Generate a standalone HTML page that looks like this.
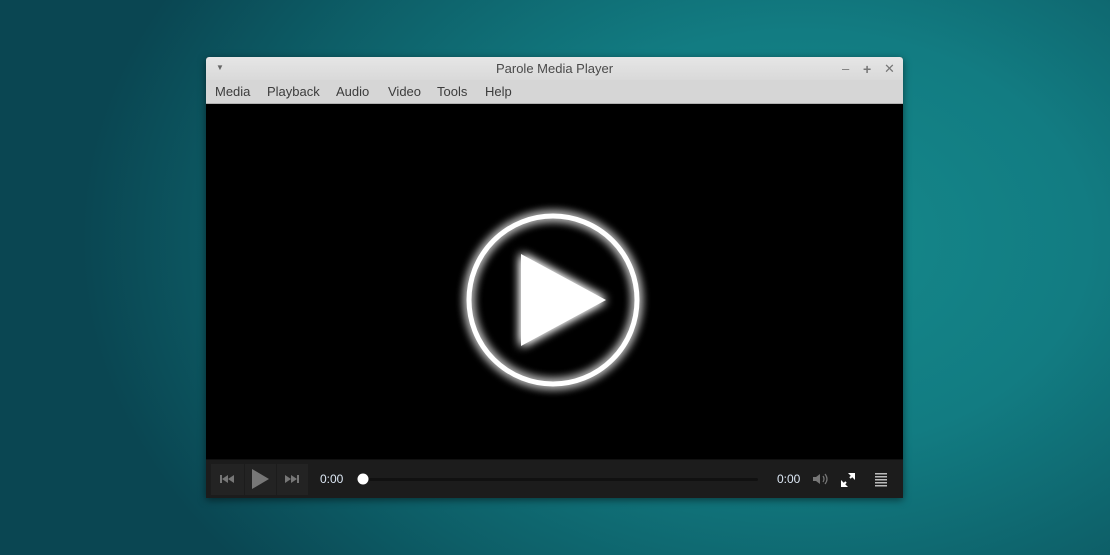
<!DOCTYPE html>
<html><head><style>
html,body{margin:0;width:1110px;height:555px;overflow:hidden}
body{background:radial-gradient(ellipse 720px 520px at 800px 240px,#15898b 0%,#127c82 40%,#0d5e67 75%,#0a4652 100%);font-family:"Liberation Sans",sans-serif;position:relative}
.win{position:absolute;left:206px;top:57px;width:697px;height:441px;background:#000;box-shadow:0 2px 8px rgba(0,0,0,.5);border-radius:3px 3px 0 0;overflow:hidden}
.title{height:23px;background:linear-gradient(#e6e6e6,#d9d9d9);text-align:center;font-size:13px;line-height:24px;color:#4a4a4a;position:relative}
.menu{height:23px;background:#d6d6d6;font-size:13px;color:#3c3c3c;line-height:24px;border-bottom:1px solid #b0b0b0}
.menu span{position:absolute}
.ctrl{position:absolute;left:0;top:402px;width:697px;height:39px;background:#1c1c1c;border-top:1px solid #111}
.t{position:absolute;color:#dde8f5;font-size:12px;top:12px}
</style></head><body>
<div class="win">
<div class="title">Parole Media Player
<span style="position:absolute;left:10px;top:-1px;font-size:8px;color:#666">▼</span>
<span style="position:absolute;left:636px;top:0;color:#777;font-size:13px">–</span>
<span style="position:absolute;left:657px;top:0;color:#777;font-size:14px;font-weight:bold">+</span>
<span style="position:absolute;left:678px;top:0;color:#777;font-size:13px">✕</span>
</div>
<div class="menu" style="position:relative">
<span style="left:9px">Media</span><span style="left:61px">Playback</span><span style="left:130px">Audio</span><span style="left:182px">Video</span><span style="left:231px">Tools</span><span style="left:279px">Help</span>
</div>
<svg style="position:absolute;left:0;top:0" width="697" height="402">
<defs><filter id="g" x="-30%" y="-30%" width="160%" height="160%"><feGaussianBlur stdDeviation="5" result="b"/><feMerge><feMergeNode in="b"/><feMergeNode in="b"/><feMergeNode in="SourceGraphic"/></feMerge></filter></defs>
<g filter="url(#g)">
<circle cx="347" cy="243" r="84" fill="none" stroke="#fff" stroke-width="5"/>
<polygon points="315,197 315,289 400,243" fill="#fff"/>
</g>
</svg>
<div class="ctrl">
<div style="position:absolute;left:5px;top:4px;width:33px;height:31px;background:#232323"></div>
<div style="position:absolute;left:39px;top:4px;width:31px;height:31px;background:#232323"></div>
<div style="position:absolute;left:71px;top:4px;width:31px;height:31px;background:#232323"></div>
<svg style="position:absolute;left:0;top:0" width="697" height="39">
<g fill="#777"><rect x="14" y="15" width="2" height="8"/><polygon points="22,15 16,19 22,23"/><polygon points="28,15 22,19 28,23"/>
<polygon points="46,9 46,29 63,19"/>
<polygon points="79,15 85,19 79,23"/><polygon points="85,15 91,19 85,23"/><rect x="91" y="15" width="2" height="8"/>
<polygon points="607,17 610,17 614,14 614,24 610,21 607,21"/></g>
<path d="M617 16 q2 3 0 6 M619 14 q4 5 0 10" stroke="#777" fill="none" stroke-width="1.2"/>
<rect x="162" y="18" width="390" height="3" rx="1.5" fill="#111"/>
<circle cx="157" cy="19" r="5.5" fill="#fff"/>
<g stroke="#fff" stroke-width="2" fill="none"><path d="M636 26 L640 22 M644 18 L648 14"/></g>
<polygon points="642,13 649,13 649,20" fill="#fff"/><polygon points="635,20 635,27 642,27" fill="#fff"/>
<g fill="#bbb"><rect x="669" y="13" width="12" height="1.5"/><rect x="669" y="16" width="12" height="1.5"/><rect x="669" y="19" width="12" height="1.5"/><rect x="669" y="22" width="12" height="1.5"/><rect x="669" y="25" width="12" height="1.5"/></g>
</svg>
<span class="t" style="left:114px">0:00</span>
<span class="t" style="left:571px">0:00</span>
</div>
</div>
</body></html>
